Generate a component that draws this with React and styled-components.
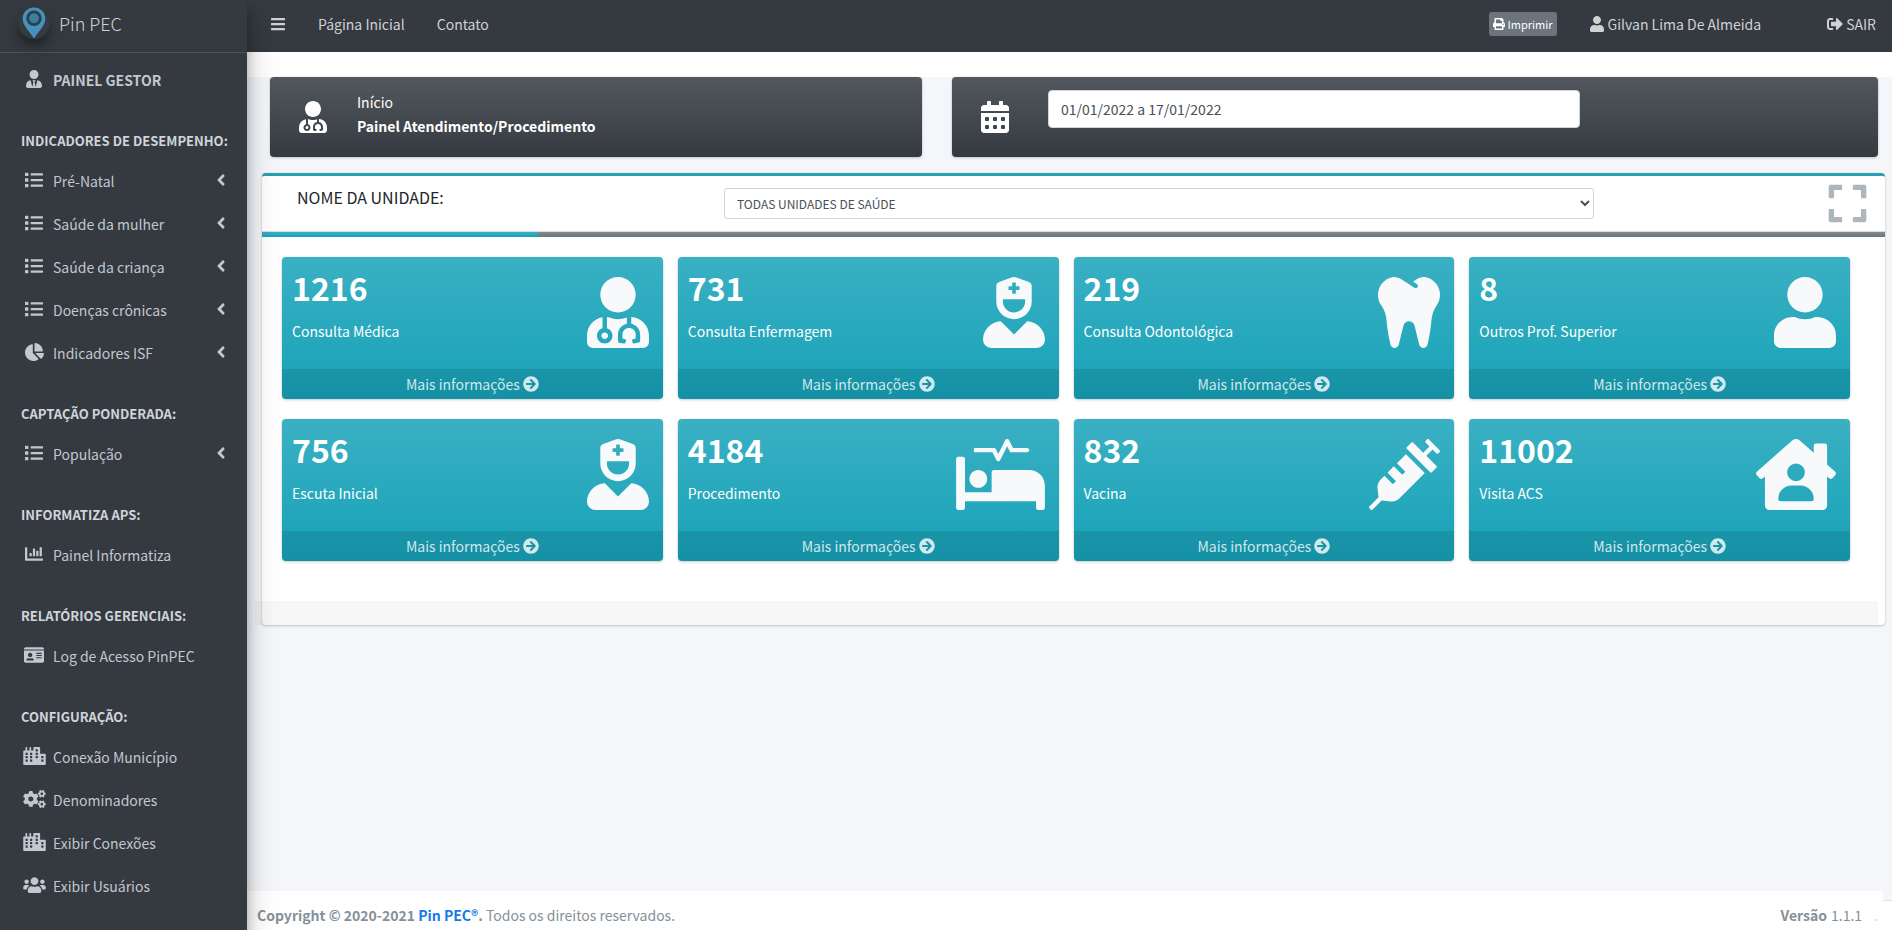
import React, { useState } from 'react';
import styled, { createGlobalStyle } from 'styled-components';
import {
  FaAngleLeft,
  FaArrowCircleRight,
  FaBars,
  FaCalendarAlt,
  FaChartBar,
  FaChartPie,
  FaCity,
  FaCogs,
  FaExpand,
  FaHouseUser,
  FaIdCard,
  FaList,
  FaPrint,
  FaProcedures,
  FaSignOutAlt,
  FaSyringe,
  FaTooth,
  FaUser,
  FaUserMd,
  FaUserNurse,
  FaUsers,
  FaUserTie,
} from 'react-icons/fa';

const GlobalStyle = createGlobalStyle`
  * {
    box-sizing: border-box;
  }
  body {
    margin: 0;
    font-family: 'Noto Sans CJK SC', 'Noto Sans', sans-serif;
    font-size: 14px;
    line-height: 24px;
    color: #212529;
    background-color: #f4f6f9;
  }
  a {
    text-decoration: none;
    color: inherit;
  }
  button, input, select {
    font-family: inherit;
  }
  ul {
    list-style: none;
    margin: 0;
    padding: 0;
  }
  svg {
    flex-shrink: 0;
  }
`
const Wrapper = styled.div`
  display: flex;
  min-height: 100vh;
`
const Sidebar = styled.aside`
  position: relative;
  z-index: 2;
  flex: 0 0 247px;
  background-color: #343a40;
  color: #c2c7d0;
  box-shadow: 0 14px 28px rgba(0, 0, 0, 0.25), 0 10px 10px rgba(0, 0, 0, 0.22);
`
const Brand = styled.a`
  display: flex;
  align-items: center;
  gap: 9px;
  height: 53px;
  padding: 0 0 6px 18px;
  border-bottom: 1px solid #4b545c;
  font-size: 18px;
  font-weight: 300;
  color: #cfd2d6;
`
const LogoBox = styled.span`
  display: flex;
  justify-content: center;
  width: 32px;
  height: 32px;
  border-radius: 50%;
  box-shadow: 0 10px 20px rgba(0, 0, 0, 0.19), 0 6px 6px rgba(0, 0, 0, 0.23);
`
const Menu = styled.nav`
  padding: 7px 8px 0;
`
const MenuHeader = styled.h2`
  margin: 0;
  padding: 28px 0 10px 13px;
  font-size: 13px;
  font-weight: 700;
  line-height: 20px;
  color: #d0d4db;
  white-space: nowrap;
`
const MenuItem = styled.li`
  padding-bottom: 3px;
`
const MenuLink = styled.a`
  display: flex;
  align-items: center;
  height: 40px;
  padding: 0 9px 0 13px;
  font-weight: ${({ $bold }) => ($bold ? 700 : 400)};

  & > span {
    flex: 1;
    padding-left: 6px;
  }
`
const MenuIcon = styled.i`
  display: flex;
  justify-content: center;
  width: 26px;
  padding-bottom: 3px;

  & > svg {
    width: ${({ $width }) => $width || 18}px;
    height: 18px;
  }
`
const Arrow = styled(FaAngleLeft)`
  margin-bottom: 3px;
  font-size: 18px;
`
const Page = styled.div`
  flex: 1;
  min-width: 0;
  display: flex;
  flex-direction: column;
`
const Navbar = styled.header`
  display: flex;
  align-items: center;
  height: 52px;
  padding: 0 16px 4px 23px;
  background-color: #343a40;
  color: #d0d1d3;
`
const NavLeft = styled.nav`
  display: flex;
  align-items: center;
  gap: 32px;
  flex: 1;
`
const NavRight = styled.div`
  display: flex;
  align-items: center;
`
const NavLink = styled.a`
  display: flex;
  align-items: center;
  gap: 3px;
`
const UserLink = styled(NavLink)`
  margin: 0 66px 0 32px;
`
const IconButton = styled.button`
  display: flex;
  padding: 0;
  border: none;
  background: none;
  color: inherit;
  font-size: 16px;
  cursor: pointer;
`
const PrintButton = styled.button`
  display: flex;
  align-items: center;
  gap: 3px;
  height: 24px;
  padding: 0 4px;
  border: none;
  border-radius: 3px;
  background-color: #6c757d;
  color: #fff;
  font-size: 11px;
  line-height: 16px;
  cursor: pointer;
`
const TopStrip = styled.div`
  height: 25px;
  background-color: #fff;
`
const Main = styled.main`
  flex: 1;
  padding: 0 7px 0 15px;
`
const InfoRow = styled.div`
  display: grid;
  grid-template-columns: 652fr 926fr;
  gap: 30px;
  padding: 0 7px 0 8px;
`
const InfoBox = styled.section`
  display: flex;
  height: 80px;
  border-radius: 4px;
  background: linear-gradient(180deg, #52585d, #343a40);
  box-shadow: 0 0 1px rgba(0, 0, 0, 0.13), 0 1px 3px rgba(0, 0, 0, 0.2);
  color: #fff;
`
const InfoIcon = styled.span`
  display: flex;
  align-items: center;
  justify-content: center;
  width: 87px;
  padding-right: 2px;
  font-size: 32px;
`
const InfoText = styled.div`
  padding-top: 13px;

  & > p {
    margin: 0;
  }
`
const DateInput = styled.input`
  width: 532px;
  max-width: 66%;
  height: 38px;
  margin: 13px 0 0 9px;
  padding: 0 12px;
  border: 1px solid #ced4da;
  border-radius: 4px;
  background-color: #fff;
  color: #495057;
  font-size: 14px;
`
const Panel = styled.section`
  margin-top: 16px;
  border-top: 3px solid #2a9fb0;
  border-radius: 4px;
  background-color: #fff;
  box-shadow: 0 0 1px rgba(0, 0, 0, 0.13), 0 1px 3px rgba(0, 0, 0, 0.2);
`
const PanelHeader = styled.div`
  display: grid;
  grid-template-columns: 427fr 870fr 291fr;
  height: 56px;
  padding: 0 0 0 35px;
  border-bottom: 1px solid #d8dadc;
`
const UnitLabel = styled.label`
  padding-top: 9px;
  font-size: 16px;
`
const UnitSelect = styled.select`
  height: 31px;
  margin-top: 12px;
  padding: 0 8px;
  border: 1px solid #ced4da;
  border-radius: 3px;
  background-color: #fff;
  color: #495057;
  font-size: 12px;
`
const ExpandButton = styled(IconButton)`
  justify-self: end;
  align-self: center;
  margin-right: 16px;
  color: #adb5bd;
  font-size: 43px;
`
const Progress = styled.div`
  height: 5px;
  background: linear-gradient(180deg, #828a91, #6c757d);
`
const ProgressBar = styled.div`
  height: 100%;
  background: linear-gradient(180deg, #3ab0c3, #17a2b8);
`
const Cards = styled.div`
  display: grid;
  grid-template-columns: repeat(4, 1fr);
  gap: 20px 15px;
  padding: 20px 35px 40px 20px;
`
const Card = styled.article`
  border-radius: 4px;
  background: linear-gradient(180deg, #3ab0c3, #17a2b8);
  box-shadow: 0 0 1px rgba(0, 0, 0, 0.13), 0 1px 3px rgba(0, 0, 0, 0.2);
  color: #fff;
  overflow: hidden;
`
const CardBody = styled.div`
  display: flex;
  justify-content: space-between;
  height: 112px;
  padding: 10px 14px 0 10px;
`
const CardValue = styled.h3`
  margin: 0;
  font-size: 32px;
  font-weight: 700;
  line-height: 40px;
`
const CardLabel = styled.p`
  margin: 12px 0 0;
`
const CardIcon = styled.span`
  display: flex;
  align-items: flex-start;
  padding-top: 10px;
  color: #f8f9fa;

  & > svg {
    width: ${({ $width }) => $width || 62}px;
    height: 71px;
  }
`
const CardFooter = styled.a`
  display: flex;
  align-items: center;
  justify-content: center;
  gap: 3px;
  height: 30px;
  background-color: rgba(0, 0, 0, 0.1);
  color: rgba(255, 255, 255, 0.8);

  & > svg {
    font-size: 16px;
  }
`
const PanelFooter = styled.div`
  height: 24px;
  margin: 0 7px 0 -7px;
  background-color: rgba(0, 0, 0, 0.03);
`
const FooterRow = styled.div`
  display: flex;
  align-items: flex-end;
`
const Footer = styled.footer`
  flex: 1;
  display: flex;
  justify-content: space-between;
  height: 39px;
  padding: 12px 5px 0 10px;
  background-color: #fff;
  color: #869099;

  & a {
    color: #1479f0;
  }
`
const FooterEdge = styled.div`
  width: 9px;
  height: 30px;
  border-top: 1px solid #dee2e6;
  background-color: #fff;
`
const Version = styled.div`
  display: flex;
  gap: 4px;
`
const Dot = styled.span`
  padding-left: 8px;
  color: #ced4da;
`

const sections = [
  {
    title: 'INDICADORES DE DESEMPENHO:',
    items: [
      { label: 'Pré-Natal', icon: FaList, tree: true },
      { label: 'Saúde da mulher', icon: FaList, tree: true },
      { label: 'Saúde da criança', icon: FaList, tree: true },
      { label: 'Doenças crônicas', icon: FaList, tree: true },
      { label: 'Indicadores ISF', icon: FaChartPie, iconWidth: 19, tree: true },
    ],
  },
  {
    title: 'CAPTAÇÃO PONDERADA:',
    items: [{ label: 'População', icon: FaList, tree: true }],
  },
  {
    title: 'INFORMATIZA APS:',
    items: [{ label: 'Painel Informatiza', icon: FaChartBar }],
  },
  {
    title: 'RELATÓRIOS GERENCIAIS:',
    items: [{ label: 'Log de Acesso PinPEC', icon: FaIdCard, iconWidth: 20 }],
  },
  {
    title: 'CONFIGURAÇÃO:',
    items: [
      { label: 'Conexão Município', icon: FaCity, iconWidth: 23 },
      { label: 'Denominadores', icon: FaCogs, iconWidth: 23 },
      { label: 'Exibir Conexões', icon: FaCity, iconWidth: 23 },
      { label: 'Exibir Usuários', icon: FaUsers, iconWidth: 23 },
    ],
  },
]

const cards = [
  { value: 1216, label: 'Consulta Médica', icon: FaUserMd },
  { value: 731, label: 'Consulta Enfermagem', icon: FaUserNurse },
  { value: 219, label: 'Consulta Odontológica', icon: FaTooth },
  { value: 8, label: 'Outros Prof. Superior', icon: FaUser },
  { value: 756, label: 'Escuta Inicial', icon: FaUserNurse },
  { value: 4184, label: 'Procedimento', icon: FaProcedures, iconWidth: 89 },
  { value: 832, label: 'Vacina', icon: FaSyringe, iconWidth: 71 },
  { value: 11002, label: 'Visita ACS', icon: FaHouseUser, iconWidth: 80 },
]

const Logo = () => (
  <LogoBox>
    <svg width="24" height="32" viewBox="0 0 24 32" aria-hidden="true">
      <path
        d="M12 0.5C5.6 0.5 0.7 5.4 0.7 11.6c0 7.4 6.6 12.3 11.3 20 4.7-7.7 11.3-12.6 11.3-20C23.3 5.4 18.4 0.5 12 0.5z"
        fill="#4592bd"
      />
      <circle cx="12" cy="11.3" r="7.7" fill="#2f3e4c" />
      <circle cx="12" cy="11.3" r="5" fill="#37809c" />
    </svg>
  </LogoBox>
)

const MenuEntry = ({ label, icon: Icon, iconWidth, tree, bold }) => (
  <MenuItem>
    <MenuLink href="#" $bold={bold}>
      <MenuIcon $width={iconWidth}><Icon /></MenuIcon>
      <span>{label}</span>
      {tree && <Arrow />}
    </MenuLink>
  </MenuItem>
)

const App = () => {
  const [period, setPeriod] = useState('01/01/2022 a 17/01/2022')
  const [progress] = useState(17)

  return (
    <>
      <GlobalStyle />
      <Wrapper>
        <Sidebar>
          <Brand href="#">
            <Logo />
            Pin PEC
          </Brand>
          <Menu>
            <ul>
              <MenuEntry label="PAINEL GESTOR" icon={FaUserTie} bold />
            </ul>
            {sections.map(section => (
              <React.Fragment key={section.title}>
                <MenuHeader>{section.title}</MenuHeader>
                <ul>
                  {section.items.map(item => <MenuEntry key={item.label} {...item} />)}
                </ul>
              </React.Fragment>
            ))}
          </Menu>
        </Sidebar>
        <Page>
          <Navbar>
            <NavLeft>
              <IconButton type="button" aria-label="Menu"><FaBars /></IconButton>
              <NavLink href="#">Página Inicial</NavLink>
              <NavLink href="#">Contato</NavLink>
            </NavLeft>
            <NavRight>
              <PrintButton type="button"><FaPrint size={12} /> Imprimir</PrintButton>
              <UserLink href="#"><FaUser size={16} /> Gilvan Lima De Almeida</UserLink>
              <NavLink href="#"><FaSignOutAlt size={16} /> SAIR</NavLink>
            </NavRight>
          </Navbar>
          <TopStrip />
          <Main>
            <InfoRow>
              <InfoBox>
                <InfoIcon><FaUserMd /></InfoIcon>
                <InfoText>
                  <p>Início</p>
                  <p><strong>Painel Atendimento/Procedimento</strong></p>
                </InfoText>
              </InfoBox>
              <InfoBox>
                <InfoIcon><FaCalendarAlt /></InfoIcon>
                <DateInput
                  type="text"
                  aria-label="Período"
                  value={period}
                  onChange={e => setPeriod(e.target.value)}
                />
              </InfoBox>
            </InfoRow>
            <Panel>
              <PanelHeader>
                <UnitLabel htmlFor="unidade">NOME DA UNIDADE:</UnitLabel>
                <UnitSelect id="unidade">
                  <option>TODAS UNIDADES DE SAÚDE</option>
                </UnitSelect>
                <ExpandButton type="button" aria-label="Expandir"><FaExpand /></ExpandButton>
              </PanelHeader>
              <Progress>
                <ProgressBar style={{ width: `${progress}%` }} />
              </Progress>
              <Cards>
                {cards.map(({ value, label, icon: Icon, iconWidth }) => (
                  <Card key={label}>
                    <CardBody>
                      <div>
                        <CardValue>{value}</CardValue>
                        <CardLabel>{label}</CardLabel>
                      </div>
                      <CardIcon $width={iconWidth}><Icon /></CardIcon>
                    </CardBody>
                    <CardFooter href="#">Mais informações <FaArrowCircleRight /></CardFooter>
                  </Card>
                ))}
              </Cards>
              <PanelFooter />
            </Panel>
          </Main>
          <FooterRow>
            <Footer>
              <div>
                <strong>Copyright © 2020-2021 <a href="#">Pin PEC®</a>.</strong> Todos os direitos reservados.
              </div>
              <Version><strong>Versão</strong> 1.1.1 <Dot>.</Dot></Version>
            </Footer>
            <FooterEdge />
          </FooterRow>
        </Page>
      </Wrapper>
    </>
  )
}

export default App
